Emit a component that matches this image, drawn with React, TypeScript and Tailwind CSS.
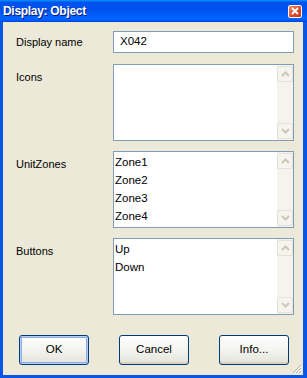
import React from 'react';

type ListBoxProps = {
  items: string[];
};

function ScrollArrow({ down }: { down?: boolean }) {
  return (
    <div className="h-[16px] w-[16px] rounded-[2px] border border-[#E4E2D6] bg-[#F5F4EE] flex items-center justify-center">
      <svg width="9" height="6" viewBox="0 0 9 6" className={down ? 'rotate-180' : ''}>
        <path d="M1 5 L4.5 1.5 L8 5" fill="none" stroke="#CBC8B8" strokeWidth="2" />
      </svg>
    </div>
  );
}

function ListBox({ items }: ListBoxProps) {
  return (
    <div className="w-[181px] h-[77px] border border-[#7F9DB9] bg-white flex">
      <div className="flex-1 pl-[1px] pt-[1px] leading-[18px] text-[11.5px] text-black">
        {items.map((item) => (
          <div key={item}>{item}</div>
        ))}
      </div>
      <div className="w-[16px] bg-[#F4F3EE] flex flex-col justify-between py-[1px]">
        <ScrollArrow />
        <ScrollArrow down />
      </div>
    </div>
  );
}

function DialogButton({ label, isDefault }: { label: string; isDefault?: boolean }) {
  return (
    <button
      className={
        'w-[70px] h-[30px] rounded-[3px] border border-[#003C74] bg-gradient-to-b from-[#FFFFFF] via-[#F4F4F0] to-[#E3E2DA] text-[11.5px] text-black ' +
        (isDefault ? 'shadow-[inset_0_0_0_1px_#B5CFFA,inset_0_0_0_2px_#8AABE8]' : 'shadow-[inset_0_-2px_0_#D6D0C5]')
      }
    >
      {label}
    </button>
  );
}

export default function App() {
  return (
    <div className="w-[307px] h-[378px] flex flex-col bg-[#0855E6] font-['Liberation_Sans',Arial,sans-serif] text-[11px] text-black">
      <div className="h-[22px] flex items-center justify-between pl-[3px] pr-[5px] bg-[linear-gradient(to_bottom,#0997FF_0%,#0053EE_10%,#0050EE_40%,#0066FF_85%,#005BFF_92%,#003DD7_100%)]">
        <span className="text-white font-bold text-[12px] tracking-[-0.3px] [text-shadow:1px_1px_0_#0A1883]">
          Display: Object
        </span>
        <div className="w-[14px] h-[13px] rounded-[2px] border border-white bg-gradient-to-br from-[#F08D73] via-[#E0502D] to-[#C13A1A] flex items-center justify-center">
          <svg width="8" height="8" viewBox="0 0 8 8">
            <path d="M1 1 L7 7 M7 1 L1 7" stroke="white" strokeWidth="1.8" />
          </svg>
        </div>
      </div>

      <div className="flex-1 ml-[3px] mr-[4px] mb-[3px] bg-[#ECE9D8] relative flex flex-col pl-[13px] pt-[9px]">
        <div className="flex items-center">
          <span className="w-[97px]">Display name</span>
          <div className="w-[181px] h-[22px] border border-[#7F9DB9] bg-white flex items-center pl-[6px] text-[11.5px]">
            X042
          </div>
        </div>

        <div className="flex mt-[11px]">
          <span className="w-[97px] pt-[5px]">Icons</span>
          <ListBox items={[]} />
        </div>

        <div className="flex mt-[10px]">
          <span className="w-[97px] pt-[5px]">UnitZones</span>
          <ListBox items={['Zone1', 'Zone2', 'Zone3', 'Zone4']} />
        </div>

        <div className="flex mt-[10px]">
          <span className="w-[97px] pt-[5px]">Buttons</span>
          <ListBox items={['Up', 'Down']} />
        </div>

        <div className="flex gap-[30px] mt-[20px] pl-[3px]">
          <DialogButton label="OK" isDefault />
          <DialogButton label="Cancel" />
          <DialogButton label="Info..." />
        </div>

        <svg className="absolute right-[1px] bottom-[1px]" width="11" height="11" viewBox="0 0 11 11">
          <path d="M10 2 L2 10 M10 5 L5 10 M10 8 L8 10" stroke="#B5B2A2" strokeWidth="1" />
          <path d="M11 3 L3 11 M11 6 L6 11 M11 9 L9 11" stroke="#FFFFFF" strokeWidth="1" />
        </svg>
      </div>
    </div>
  );
}
